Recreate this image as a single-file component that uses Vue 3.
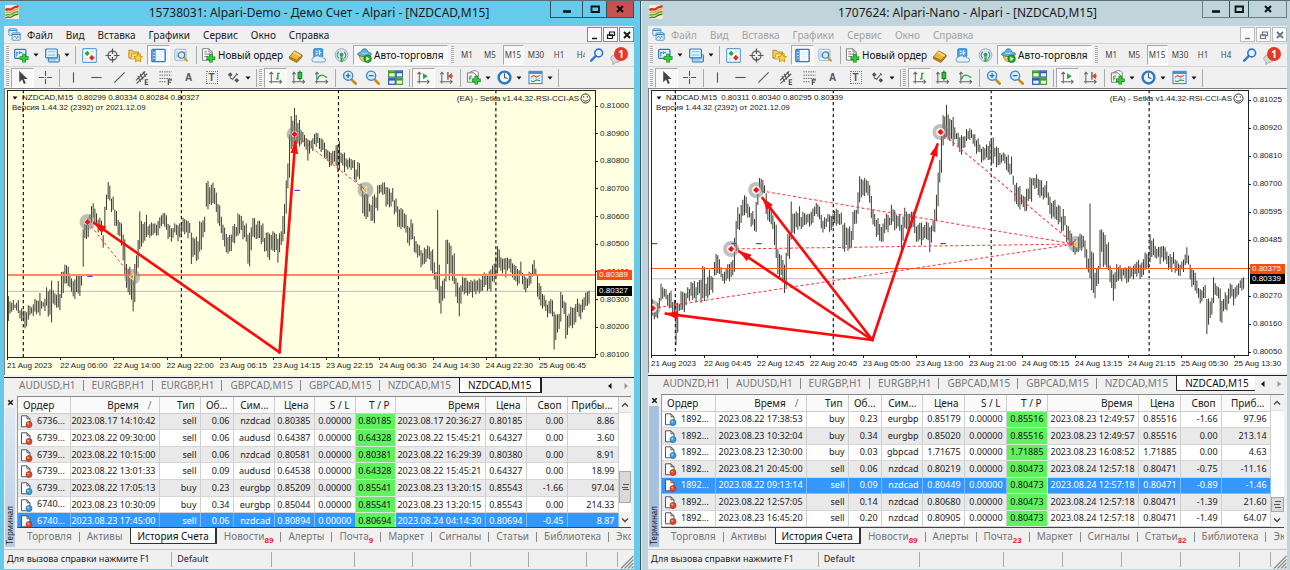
<script setup>
// Bar ranges as x, high, low triplets in plot units (three units per pixel).
const demoBars = [
  25,620,698, 32,632,668, 40,630,655, 48,640,655, 55,628,668, 62,655,690, 70,658,690, 80,665,710, 85,640,682, 92,648,675,
  100,645,675, 108,625,668, 115,632,668, 122,605,670, 128,635,655, 135,620,660, 140,592,650, 148,600,675, 155,570,690,
  160,595,640, 168,610,650, 175,575,655, 182,610,655, 186,540,625, 191,545,602, 197,520,580, 203,528,585, 210,545,595,
  215,565,600, 222,570,620, 230,555,605, 238,552,615, 244,550,590, 247,498,585, 250,420,525, 256,400,445, 263,385,440,
  268,370,410, 275,350,395, 281,338,385, 286,350,395, 292,370,410, 298,385,420, 303,390,440, 308,430,470, 313,400,460,
  316,350,420, 320,310,355, 325,278,328, 332,285,325, 338,320,365, 344,355,405, 350,365,410, 356,388,430, 362,390,440,
  368,400,460, 372,430,510, 376,450,560, 381,520,590, 388,530,610, 395,550,630, 401,560,657, 405,520,635, 409,490,560,
  413,450,530
]
const sharedBars = [
  418,360,480, 424,395,465, 430,400,460, 436,390,445, 442,375,440, 448,405,440, 455,395,440, 462,395,430, 468,400,430,
  475,395,435, 482,380,420, 488,370,405, 495,365,405, 502,378,420, 508,400,440, 515,415,460, 520,410,440, 527,402,430,
  535,400,455, 542,400,435, 550,385,430, 557,385,430, 564,393,440, 570,395,430, 575,430,515, 582,440,500, 590,440,510,
  597,450,512, 603,395,480, 608,385,435, 614,380,425, 618,330,400, 622,275,355, 630,290,345, 638,278,340, 645,290,335,
  652,310,365, 658,340,405, 664,380,432, 670,400,445, 676,415,470, 682,430,480, 688,435,490, 694,430,480, 700,410,460,
  706,400,455, 712,405,440, 718,370,430, 724,380,425, 730,390,445, 736,400,445, 742,400,450, 748,430,522, 753,410,480,
  758,378,445, 764,385,440, 770,400,450, 776,395,440, 782,390,445, 788,400,455, 794,440,490, 800,430,480, 808,425,505,
  815,435,480, 822,420,475, 828,430,485, 835,440,515, 840,430,490, 845,420,460, 850,380,455, 855,340,425, 860,265,370,
  865,220,300, 870,130,260, 874,80,180, 878,90,165, 883,48,150, 890,75,165, 896,95,160, 902,92,175, 908,120,160,
  914,135,165, 920,140,180, 926,150,205, 932,150,190, 938,145,180, 944,128,165, 950,130,165, 956,128,160, 962,138,170,
  968,145,185, 975,160,200, 982,175,208, 990,185,232, 998,185,220, 1005,180,220, 1012,160,225, 1016,165,250, 1021,150,235,
  1028,190,220, 1035,182,245, 1042,205,235, 1050,205,235, 1058,205,235, 1065,210,262, 1072,235,275, 1078,218,265,
  1084,275,305, 1090,300,365, 1097,310,380, 1103,312,380, 1110,335,370, 1117,345,390, 1123,315,395, 1130,320,355,
  1136,280,355, 1142,285,310, 1148,280,312, 1154,275,315, 1162,285,345, 1168,292,345, 1175,310,348, 1182,292,340,
  1188,325,370, 1194,345,405, 1200,360,412, 1207,352,410, 1214,370,420, 1222,370,425, 1228,410,462, 1235,382,450,
  1240,400,440, 1246,435,485, 1252,455,495, 1258,460,500, 1265,480,527, 1272,485,525, 1278,475,515, 1285,460,510,
  1292,470,505, 1298,480,545, 1304,515,570, 1310,540,590, 1315,360,600, 1321,520,645, 1326,590,668, 1332,570,635,
  1337,560,620, 1341,450,575, 1346,445,515, 1351,460,570, 1356,465,555, 1362,490,570, 1366,490,585, 1371,560,615,
  1376,580,640, 1381,590,672, 1387,580,640, 1393,560,610, 1400,565,612, 1408,570,612, 1415,570,600, 1422,570,622,
  1428,570,610, 1435,565,605, 1442,565,605, 1450,555,595, 1458,545,590, 1465,555,600, 1472,540,600, 1480,525,575,
  1487,515,570, 1491,500,560, 1495,465,555, 1501,480,530, 1508,500,545, 1515,505,540, 1522,500,555, 1528,505,540,
  1535,500,545, 1542,520,565, 1550,530,575, 1558,535,580, 1564,515,560, 1570,545,580, 1577,560,602, 1584,560,595,
  1592,545,580, 1599,525,565, 1605,508,550, 1610,530,560, 1615,555,615, 1621,575,630, 1627,590,640, 1633,610,655,
  1639,630,660, 1645,640,685, 1652,635,665, 1658,625,672, 1664,665,778, 1669,670,755, 1674,675,725, 1679,670,720,
  1684,600,690, 1690,615,655, 1696,630,665, 1701,640,745, 1706,675,740, 1712,665,710, 1718,650,710, 1724,655,705,
  1730,640,690, 1735,620,665, 1742,640,685, 1750,630,670, 1757,620,655, 1760,602,650, 1766,605,640, 1774,598,640
]
const nanoBars = [
  38,630,680, 45,650,685, 53,640,680, 58,620,655, 63,583,625, 70,590,625, 78,598,625, 85,610,650, 92,600,655, 98,630,665,
  104,630,680, 107,635,770, 111,640,725, 116,640,665, 122,598,655, 130,605,660, 138,612,645, 145,590,630, 152,575,620,
  160,575,625, 168,590,630, 175,570,615, 182,565,635, 190,530,628, 197,575,620, 204,560,618, 210,535,615, 216,560,605,
  222,510,560, 230,492,550, 237,510,545, 244,530,560, 250,545,578, 258,530,575, 264,525,560, 270,520,575, 276,510,555,
  281,440,550, 286,395,480, 292,350,420, 298,365,415, 304,345,400, 310,325,370, 316,318,375, 322,335,380, 328,350,385,
  335,365,405, 342,385,415, 346,400,440, 349,330,425, 354,290,350, 360,260,300, 366,268,305, 371,280,310, 377,310,365,
  384,340,390, 391,350,400, 398,370,420, 405,395,460, 410,400,505, 415,480,545, 421,490,560, 427,510,575, 434,520,612,
  440,490,585, 446,430,500
]

function triplets(flat) {
  const out = []
  for (let i = 0; i < flat.length; i += 3) out.push([flat[i], flat[i + 1], flat[i + 2]])
  return out
}

function barPath(points) {
  let d = ''
  let k = 0
  let n = 0
  const last = points[points.length - 1][0]
  for (let x = points[0][0]; x <= last; x += 5) {
    while (k < points.length - 2 && points[k + 1][0] < x) k++
    const a = points[k]
    const b = points[k + 1]
    const near = Math.abs(a[0] - x) < Math.abs(b[0] - x) ? a : b
    const up = (n * 7) % 5 * 2 - 2
    const down = (n * 11) % 7 * 2 - 5
    d += `M${x} ${near[1] + up}V${near[2] + down}`
    n++
  }
  return d
}

const demoPath = barPath([...triplets(demoBars), ...triplets(sharedBars)])
const nanoPath = barPath([
  ...triplets(nanoBars),
  ...triplets(sharedBars).map(([x, h, l]) => [x + 35, h * 0.938 - 3, l * 0.938 - 3])
])

const menus = ['Файл', 'Вид', 'Вставка', 'Графики', 'Сервис', 'Окно', 'Справка']
const heads = ['Ордер', 'Время', 'Тип', 'Об...', 'Сим...', 'Цена', 'S / L', 'T / P', 'Время', 'Цена', 'Своп']
const frames = ['M1', 'M5', 'M15', 'M30', 'H1', 'H4']
const drawTools = ['vline', 'hline', 'tline', 'channel', 'fibo', 'letter', 'label']

const windows = [
  {
    id: 'demo',
    title: '15738031: Alpari-Demo - Демо Счет - Alpari - [NZDCAD,M15]',
    quote: '0.80299 0.80334 0.80284 0.80327',
    view: '24 3 1764 798',
    right: 1788,
    core: 9,
    askWidth: 6,
    bars: demoPath,
    days: [70, 545, 1017, 1490],
    ask: 554,
    bid: 604,
    deals: [[263, 396, 397, 561], [885, 133, 1098, 300]],
    opens: [[263, 396], [885, 133]],
    closes: [[397, 561], [1098, 300]],
    stops: [[262, 559], [885, 301]],
    arrows: [[840, 787, 283, 399], [840, 787, 887, 155]],
    prices: ['0.81000', '0.80900', '0.80800', '0.80700', '0.80600', '0.80500', '0.80400', '0.80300', '0.80200', '0.80100'],
    askPrice: '0.80389',
    bidPrice: '0.80327',
    dates: ['21 Aug 2023', '22 Aug 06:00', '22 Aug 14:00', '22 Aug 22:00', '23 Aug 06:15', '23 Aug 14:15', '23 Aug 22:15', '24 Aug 06:30', '24 Aug 14:30', '24 Aug 22:30', '25 Aug 06:45'],
    tabs: ['AUDUSD,H1', 'EURGBP,H1', 'EURGBP,H1', 'GBPCAD,M15', 'GBPCAD,M15', 'NZDCAD,M15', 'NZDCAD,M15'],
    profit: 'Прибы...',
    cols: [52, 89, 41, 33, 41, 40, 41, 40, 90, 41, 41, 51],
    selected: 6,
    striped: 0,
    rows: [
      ['6736...', '2023.08.17 14:10:42', 'sell', '0.06', 'nzdcad', '0.80385', '0.00000', '0.80185', '2023.08.17 20:36:27', '0.80185', '0.00', '8.86'],
      ['6739...', '2023.08.22 09:30:00', 'sell', '0.06', 'audusd', '0.64387', '0.00000', '0.64328', '2023.08.22 15:45:21', '0.64327', '0.00', '3.60'],
      ['6739...', '2023.08.22 10:15:00', 'sell', '0.06', 'nzdcad', '0.80581', '0.00000', '0.80381', '2023.08.22 16:29:39', '0.80380', '0.00', '8.91'],
      ['6739...', '2023.08.22 13:01:33', 'sell', '0.09', 'audusd', '0.64538', '0.00000', '0.64328', '2023.08.22 15:45:21', '0.64327', '0.00', '18.99'],
      ['6739...', '2023.08.22 17:05:13', 'buy', '0.23', 'eurgbp', '0.85209', '0.00000', '0.85541', '2023.08.23 13:20:15', '0.85543', '-1.66', '97.04'],
      ['6740...', '2023.08.23 10:30:09', 'buy', '0.34', 'eurgbp', '0.85044', '0.00000', '0.85541', '2023.08.23 13:20:15', '0.85543', '0.00', '214.33'],
      ['6740...', '2023.08.23 17:45:00', 'sell', '0.06', 'nzdcad', '0.80894', '0.00000', '0.80694', '2023.08.24 04:14:30', '0.80694', '-0.45', '8.87']
    ],
    sections: [['Торговля'], ['Активы'], ['История Счета'], ['Новости', 89], ['Алерты'], ['Почта', 9], ['Маркет'], ['Сигналы'], ['Статьи'], ['Библиотека'], ['Эксперты']]
  },
  {
    id: 'nano',
    title: '1707624: Alpari-Nano - Alpari - [NZDCAD,M15]',
    quote: '0.80311 0.80340 0.80295 0.80339',
    view: '36 3 1785 792',
    right: 1821,
    core: 13,
    askWidth: 4,
    bars: nanoPath,
    days: [106, 579, 1052, 1525],
    ask: 536,
    bid: 566,
    deals: [[38, 655, 1300, 462], [273, 477, 1300, 462], [348, 300, 1300, 462], [900, 126, 1300, 462]],
    opens: [[38, 655], [273, 477], [348, 300], [900, 126]],
    closes: [[1305, 462]],
    stops: [[36, 461], [273, 461], [348, 461], [900, 461]],
    arrows: [[696, 750, 77, 671], [696, 750, 297, 484], [696, 750, 367, 324], [696, 750, 891, 163]],
    prices: ['0.81025', '0.80920', '0.80810', '0.80700', '0.80595', '0.80485', '0.80380', '0.80270', '0.80160', '0.80050'],
    askPrice: '0.80375',
    bidPrice: '0.80339',
    dates: ['21 Aug 2023', '22 Aug 04:45', '22 Aug 12:45', '22 Aug 20:45', '23 Aug 05:00', '23 Aug 13:00', '23 Aug 21:00', '24 Aug 05:15', '24 Aug 13:15', '24 Aug 21:15', '25 Aug 05:30', '25 Aug 13:30'],
    tabs: ['AUDNZD,H1', 'AUDUSD,H1', 'EURGBP,H1', 'EURGBP,H1', 'GBPCAD,M15', 'GBPCAD,M15', 'NZDCAD,M15', 'NZDCAD,M15'],
    profit: 'Приб...',
    cols: [53, 91, 42, 33, 41, 42, 42, 41, 91, 42, 41, 49],
    selected: 4,
    striped: 1,
    rows: [
      ['1892...', '2023.08.22 17:38:53', 'buy', '0.23', 'eurgbp', '0.85179', '0.00000', '0.85516', '2023.08.23 12:49:57', '0.85516', '-1.66', '97.96'],
      ['1892...', '2023.08.23 10:32:04', 'buy', '0.34', 'eurgbp', '0.85020', '0.00000', '0.85516', '2023.08.23 12:49:57', '0.85516', '0.00', '213.14'],
      ['1892...', '2023.08.23 12:30:00', 'buy', '0.03', 'gbpcad', '1.71675', '0.00000', '1.71885', '2023.08.23 16:08:52', '1.71885', '0.00', '4.63'],
      ['1892...', '2023.08.21 20:45:00', 'sell', '0.06', 'nzdcad', '0.80219', '0.00000', '0.80473', '2023.08.24 12:57:18', '0.80471', '-0.75', '-11.16'],
      ['1892...', '2023.08.22 09:13:14', 'sell', '0.09', 'nzdcad', '0.80449', '0.00000', '0.80473', '2023.08.24 12:57:18', '0.80471', '-0.89', '-1.46'],
      ['1892...', '2023.08.22 12:57:05', 'sell', '0.14', 'nzdcad', '0.80680', '0.00000', '0.80473', '2023.08.24 12:57:18', '0.80471', '-1.39', '21.60'],
      ['1892...', '2023.08.23 16:45:20', 'sell', '0.20', 'nzdcad', '0.80905', '0.00000', '0.80473', '2023.08.24 12:57:18', '0.80471', '-1.49', '64.07']
    ],
    sections: [['Торговля'], ['Активы'], ['История Счета'], ['Новости', 89], ['Алерты'], ['Почта', 23], ['Маркет'], ['Сигналы'], ['Статьи', 32], ['Библиотека'], ['Эксперты']]
  }
]

// Vertical place of a level line inside the plot, as a share of its height.
function level(w, y) {
  return `${((y - 3) / Number(w.view.split(' ')[3])) * 100}%`
}
</script>

<template>
  <svg class="sprite" aria-hidden="true">
    <symbol id="i-logo" viewBox="0 0 16 16">
      <rect width="16" height="16" fill="#f4ecd8" />
      <path d="M.5 6c3-3 5 1 8-2s4-1 7-3" fill="none" stroke="#d8302a" stroke-width="2.600" />
      <path d="M.5 9.200c3-3 5 1 8-2s4-1 7-3" fill="none" stroke="#e8a23a" stroke-width="1.600" />
      <path d="M.5 12c3-3 5 1 8-2s4-1 7-3" fill="none" stroke="#5fae34" stroke-width="2" />
      <path d="M.5 15c3-3 5 1 8-2s4-1 7-3" fill="none" stroke="#3f7a2e" stroke-width="1.600" />
    </symbol>
    <symbol id="i-charts" viewBox="0 0 16 16">
      <rect x="1" y="1" width="10" height="8" rx="1" fill="#dff0fb" stroke="#3f8fce" />
      <path d="M1 3h10" stroke="#3f8fce" stroke-width="1.500" />
      <rect x="5" y="6" width="10" height="9" rx="1" fill="#e9f5fd" stroke="#2f7fc4" />
      <path d="M5 8h10" stroke="#2f7fc4" stroke-width="1.500" />
      <path d="M6.500 12l2-2 2 3 1.500-3 1.500 2" fill="none" stroke="#2f7fc4" stroke-width=".9" />
    </symbol>
    <symbol id="i-newchart" viewBox="0 0 16 16">
      <rect x=".7" y="1.500" width="12" height="9.500" rx="1" fill="#e4f2fb" stroke="#2e79b5" stroke-width="1.300" />
      <path d="M3 4v5M3 5h2M6 3.500v3M6 5h3" stroke="#2e79b5" />
      <path d="M10.700 6v9.500M6 10.700h9.500" stroke="#0c8a16" stroke-width="3.800" />
      <path d="M10.700 6.700v8.100M6.700 10.700h8.100" stroke="#35d035" stroke-width="2.200" />
    </symbol>
    <symbol id="i-profiles" viewBox="0 0 16 16">
      <rect x="3.500" y="7" width="12" height="8" rx="1" fill="#a9cdea" stroke="#2e79b5" />
      <rect x=".7" y="1" width="12.500" height="9.500" rx="1" fill="#e4f2fb" stroke="#2e79b5" stroke-width="1.200" />
      <path d="M3 4h8M3 7.500h8" stroke="#7fb2da" />
      <path d="M12 13h2" stroke="#fff" />
    </symbol>
    <symbol id="i-market" viewBox="0 0 16 16">
      <rect x=".7" y=".7" width="14.600" height="14.600" rx="1" fill="#f8fcff" stroke="#5ba0d6" stroke-width="1.200" />
      <path d="M5.500 3l2.800 2.800-2.800 2.800-2.800-2.800z" fill="#24a836" />
      <path d="M10.500 7.300l3 3.200-3 3.200-3-3.200z" fill="#dd3322" />
      <path d="M9 4h4M3 11h3M3 13h2" stroke="#b9cfe0" />
    </symbol>
    <symbol id="i-target" viewBox="0 0 16 16">
      <circle cx="8" cy="8" r="4.800" fill="none" stroke="#666" stroke-width="1.400" />
      <path d="M8 .5v6M8 9.500v6M.5 8h6M9.500 8h6" stroke="#555" stroke-width="1.300" />
    </symbol>
    <symbol id="i-folder" viewBox="0 0 17 16">
      <path d="M1 2h4l1.500 2H12v7H1z" fill="#f0cf61" stroke="#ae8320" />
      <path d="M4.500 6H14v2L12 12H3z" fill="#f9e28a" stroke="#b98d28" stroke-width=".8" />
      <path d="M11.500 5.500l1.600 3.300 3.400.5-2.500 2.400.6 3.500-3.100-1.700-3.100 1.700.6-3.500-2.500-2.400 3.400-.5z" fill="#ffd23b" stroke="#c28a0e" stroke-width=".9" />
    </symbol>
    <symbol id="i-navigator" viewBox="0 0 16 16">
      <rect x=".9" y="1.500" width="14.200" height="13" rx="1" fill="#fdfeff" stroke="#2e79c0" stroke-width="1.500" />
      <path d="M1.500 2h3.500v12H1.500z" fill="#4b92d2" />
      <path d="M2.500 5h1.500M2.500 8h1.500M2.500 11h1.500" stroke="#fff" />
      <path d="M6.500 4.500h7M6.500 7h5M6.500 9.500h6M6.500 12h4" stroke="#d5e6f5" />
    </symbol>
    <symbol id="i-tester" viewBox="0 0 17 16">
      <rect x="1" y="1" width="12.500" height="12.500" rx="1" fill="#f2f7fb" stroke="#86abc9" />
      <path d="M3.500 3v8M6 4v5M11.500 3v8" stroke="#86abc9" />
      <circle cx="8.500" cy="7.500" r="3.600" fill="#cfe7fa" fill-opacity=".85" stroke="#4a7da8" stroke-width="1.300" />
      <path d="M11.400 10.500l4 4" stroke="#d79b28" stroke-width="2.400" />
    </symbol>
    <symbol id="i-order" viewBox="0 0 15 16">
      <path d="M1 .8h7l3.500 3.500V13H1z" fill="#fff" stroke="#777" />
      <path d="M8 .8v3.500h3.500M3 4h3M3 6.500h6M3 9h4" fill="none" stroke="#777" />
      <path d="M10 6.200v9.300M5.300 11h9.400" stroke="#0c8a16" stroke-width="3.800" />
      <path d="M10 6.900v7.900M6 11h8" stroke="#35d035" stroke-width="2.200" />
    </symbol>
    <symbol id="i-book" viewBox="0 0 16 16">
      <path d="M1.500 9.500L7 3l8 4.500-5.500 6z" fill="#e9b93c" stroke="#a87414" />
      <path d="M1.500 9.500v2L9.500 15.500l5.500-6v-2l-5.500 6z" fill="#c98d1d" stroke="#94600c" stroke-width=".8" />
      <path d="M6 4.500l7.500 4.200" stroke="#f9e08f" stroke-width="1.500" />
    </symbol>
    <symbol id="i-cloud" viewBox="0 0 16 16">
      <rect x="3" y=".8" width="9.500" height="9" rx="1" fill="#46a7ea" stroke="#2577ba" />
      <path d="M5 3.500h2M5 6h2M9 2.500v5M8 5h3" stroke="#fff" stroke-width="1.200" />
      <path d="M3.500 15a2.500 2.500 0 0 1 0-5 3.500 3 0 0 1 6-.5 3 3 0 0 1 4 1.500 2 2 0 0 1 0 4z" fill="#e6eff8" stroke="#6f9cc7" />
    </symbol>
    <symbol id="i-signal" viewBox="0 0 16 16">
      <circle cx="8" cy="7.500" r="6.800" fill="#dbe4ea" stroke="#94a9b5" />
      <path d="M5 4a5 5 0 0 0 0 7M11 4a5 5 0 0 1 0 7" fill="none" stroke="#4c86b5" stroke-width="1.300" />
      <circle cx="8" cy="7" r="2" fill="#35a14b" />
      <path d="M8 8v7" stroke="#35a14b" stroke-width="2.200" />
      <path d="M8 9l3 5" stroke="#7abf7a" stroke-width="1.500" />
    </symbol>
    <symbol id="i-auto" viewBox="0 0 16 16">
      <path d="M2.500 8h11c0 3.500-2.500 6.500-5.500 6.500S2.500 11.500 2.500 8z" fill="#f3cc55" stroke="#b88a1d" />
      <path d="M.5 7c0-2 2.500-2 3.800-2.600C5 1.500 6.500.8 8 .8s3 .7 3.700 3.600C13 5 15.500 5 15.500 7c-2.500 2.800-12.500 2.800-15 0z" fill="#5fb1dc" stroke="#28759f" stroke-width=".9" />
      <path d="M4.500 5c2 1 5 1 7 0" fill="none" stroke="#bfe2f3" />
      <circle cx="11.300" cy="11.500" r="4" fill="#29a82c" stroke="#11741a" stroke-width=".8" />
      <path d="M10 9.200l3.600 2.300-3.600 2.300z" fill="#fff" />
    </symbol>
    <symbol id="i-search" viewBox="0 0 14 14">
      <circle cx="8.700" cy="5" r="3.900" fill="#e9f3fd" stroke="#3573c8" stroke-width="1.600" />
      <path d="M5.700 8L1.200 12.700" stroke="#3573c8" stroke-width="2.400" stroke-linecap="round" />
    </symbol>
    <symbol id="i-bubble" viewBox="0 0 12 11">
      <path d="M6 .8c3 0 5.200 1.600 5.200 3.800S9 8.400 6 8.400L2.500 10.500l.7-2.700C1.700 7 .8 6 .8 4.600.8 2.400 3 .8 6 .8z" fill="#d9dadd" stroke="#a9abb0" />
    </symbol>
    <symbol id="i-cursor" viewBox="0 0 16 16">
      <path d="M4.500 1v12l3-2.800 2 4.600 2-1-2-4.300h4z" fill="#444" />
    </symbol>
    <symbol id="i-cross" viewBox="0 0 16 16">
      <path d="M8 1v5.500M8 9.500V15M1 8h5.500M9.500 8H15" stroke="#555" stroke-width="1.200" />
      <path d="M7.500 8h1" stroke="#555" />
    </symbol>
    <symbol id="i-vline" viewBox="0 0 16 16"><path d="M8 2.500v11" stroke="#555" stroke-width="1.200" /></symbol>
    <symbol id="i-hline" viewBox="0 0 16 16"><path d="M2.500 8h11" stroke="#555" stroke-width="1.200" /></symbol>
    <symbol id="i-tline" viewBox="0 0 16 16"><path d="M2.500 13.500l11-11" stroke="#555" stroke-width="1.200" /></symbol>
    <symbol id="i-channel" viewBox="0 0 16 16">
      <path d="M1 11L11 1.500M1.500 14.500L13 4M3 6.500l3 6M5.500 4l3 6M8.500 2l3 5" fill="none" stroke="#555" stroke-width="1.200" />
      <path d="M10.500 10.500H14M10.500 13H13.500M10.500 15.500H14M11 10v6" stroke="#444" stroke-width="1.100" />
    </symbol>
    <symbol id="i-fibo" viewBox="0 0 16 16">
      <path d="M1.500 2h13M1.500 5.500h13M1.500 9h13M1.500 12.500h7" stroke="#555" stroke-dasharray="1.500 1" />
      <path d="M10.500 10.500H15M10.500 13H14M11 10v6" stroke="#444" stroke-width="1.200" />
    </symbol>
    <symbol id="i-arrows" viewBox="0 0 16 16">
      <path d="M2 5l2.500-2.500L7 5 4.500 7.500zM9 11l2.500-2.500L14 11l-2.500 2.500z" fill="#555" />
      <path d="M4 8l3 2 5-6M11 3.500l1.500 2" fill="none" stroke="#555" stroke-width="1.200" />
    </symbol>
    <symbol id="i-bars" viewBox="0 0 16 16">
      <path d="M3.500 2.500v12M1 12.500h13.500M1.500 4.500l2-2 2 2M12.500 10.500l2 2-2 2" fill="none" stroke="#666" stroke-width="1.100" />
      <path d="M10.500 3v7M10.500 3.500h2M8.500 9.500h2" stroke="#189a2d" stroke-width="1.400" />
    </symbol>
    <symbol id="i-candles" viewBox="0 0 16 16">
      <path d="M3 2.500v12M1 12.500h13.500M1.500 4.500l1.500-2 2 2M12.500 10.500l2 2-2 2" fill="none" stroke="#666" stroke-width="1.100" />
      <path d="M9.500 .5v11" stroke="#117a20" stroke-width="1.200" />
      <rect x="7.500" y="2.500" width="4" height="6.500" fill="#2fc242" stroke="#117a20" />
    </symbol>
    <symbol id="i-curve" viewBox="0 0 16 16">
      <path d="M3 2.500v12M1 12.500h13.500M1.500 4.500l1.500-2 2 2M12.500 10.500l2 2-2 2" fill="none" stroke="#666" stroke-width="1.100" />
      <path d="M3.500 10C6 4 9 4.500 14 8" fill="none" stroke="#22a037" stroke-width="1.400" />
    </symbol>
    <symbol id="i-zoomin" viewBox="0 0 16 16">
      <path d="M10 10l4.500 4.500" stroke="#c78f1d" stroke-width="3" stroke-linecap="round" />
      <circle cx="6.500" cy="6" r="4.900" fill="#d6ebfb" stroke="#3e86c4" stroke-width="1.400" />
      <path d="M4 6h5M6.500 3.500v5" stroke="#2a6fb0" stroke-width="1.400" />
    </symbol>
    <symbol id="i-zoomout" viewBox="0 0 16 16">
      <path d="M10 10l4.500 4.500" stroke="#c78f1d" stroke-width="3" stroke-linecap="round" />
      <circle cx="6.500" cy="6" r="4.900" fill="#d6ebfb" stroke="#3e86c4" stroke-width="1.400" />
      <path d="M4 6h5" stroke="#2a6fb0" stroke-width="1.400" />
    </symbol>
    <symbol id="i-tile" viewBox="0 0 16 16">
      <rect x=".7" y="1" width="7" height="6.500" fill="#eef7e8" stroke="#3c9c28" stroke-width="1.300" />
      <path d="M.7 2.500h7" stroke="#3c9c28" stroke-width="2" />
      <rect x="8.700" y="1" width="7" height="6.500" fill="#e8f0fa" stroke="#2c5fb0" stroke-width="1.300" />
      <path d="M8.700 2.500h7" stroke="#2c5fb0" stroke-width="2" />
      <rect x=".7" y="8.800" width="7" height="6.500" fill="#e8f0fa" stroke="#2c5fb0" stroke-width="1.300" />
      <path d="M.7 10.300h7" stroke="#2c5fb0" stroke-width="2" />
      <rect x="8.700" y="8.800" width="7" height="6.500" fill="#eef7e8" stroke="#3c9c28" stroke-width="1.300" />
      <path d="M8.700 10.300h7" stroke="#3c9c28" stroke-width="2" />
    </symbol>
    <symbol id="i-scroll" viewBox="0 0 16 16">
      <path d="M3.500 2v12.500M1 12.500h13M1.500 4.500l2-2 2 2M12 10.500l2 2-2 2" fill="none" stroke="#666" stroke-width="1.100" />
      <path d="M7.500 3.500l5 3.200-5 3.200z" fill="#22a837" />
    </symbol>
    <symbol id="i-shift" viewBox="0 0 16 16">
      <path d="M3 2v12.500M1 12.500h13M1.500 4.500l1.500-2 2 2M12 10.500l2 2-2 2" fill="none" stroke="#666" stroke-width="1.100" />
      <path d="M9.500 2v8.500" stroke="#555" stroke-width="1.300" />
      <path d="M10 6.500l3.500-2.500v5zM12 6.500h3" fill="#d6452c" stroke="#d6452c" />
    </symbol>
    <symbol id="i-indicator" viewBox="0 0 16 16">
      <path d="M4 2.500L7.500.8H11l2 2V11H4z" fill="#fff" stroke="#777" />
      <path d="M1.500 3h7l2.500 2.500V13H1.500z" fill="#f4f4f4" stroke="#777" />
      <path d="M4 11V6.500h2.500M3 8.500h3" fill="none" stroke="#777" />
      <path d="M11 6.200v9.300M6.300 11h9.400" stroke="#0c8a16" stroke-width="3.800" />
      <path d="M11 6.900v7.900M7 11h8" stroke="#35d035" stroke-width="2.200" />
    </symbol>
    <symbol id="i-clock" viewBox="0 0 16 16">
      <circle cx="8" cy="8" r="6.300" fill="#eef6fd" stroke="#2c79c6" stroke-width="2.600" />
      <path d="M8 3.500V8l3.200 1" fill="none" stroke="#555" stroke-width="1.200" />
    </symbol>
    <symbol id="i-template" viewBox="0 0 16 16">
      <rect x="1" y="1.500" width="14" height="13" fill="#f5fafd" stroke="#4c8fc7" stroke-width="1.200" />
      <path d="M1 3h14" stroke="#4c8fc7" stroke-width="2.500" />
      <path d="M3 7.500l3-1.500 3 1.500 4-1.800" fill="none" stroke="#d0523c" stroke-width="1.200" />
      <path d="M3 11.500l3 1 3-2 4 1" fill="none" stroke="#379344" stroke-width="1.200" />
      <path d="M2 9h12" stroke="#a5c4de" stroke-dasharray="2 1" />
    </symbol>
    <symbol id="i-sell" viewBox="0 0 13 13">
      <path d="M1.500.8h5.500l3 3v8h-8.500z" fill="#fff" stroke="#555" />
      <path d="M7 .8v3h3" fill="none" stroke="#555" />
      <circle cx="9" cy="9.500" r="3" fill="#e4492a" stroke="#a62a10" stroke-width=".7" />
      <circle cx="8.200" cy="8.600" r=".9" fill="#ffb9a6" />
    </symbol>
    <symbol id="i-buy" viewBox="0 0 13 13">
      <path d="M1.500.8h5.500l3 3v8h-8.500z" fill="#fff" stroke="#555" />
      <path d="M7 .8v3h3" fill="none" stroke="#555" />
      <circle cx="9" cy="9.500" r="3" fill="#3a9fe0" stroke="#1566a4" stroke-width=".7" />
      <circle cx="8.200" cy="8.600" r=".9" fill="#c5e8ff" />
    </symbol>
    <symbol id="i-smile" viewBox="0 0 12 12">
      <circle cx="6" cy="6" r="5" fill="none" stroke="#222" />
      <path d="M4 3.500v1.500M8 3.500v1.500" stroke="#222" stroke-width="1.200" />
      <path d="M3 7.200c1.500 2.200 4.500 2.200 6 0" fill="none" stroke="#222" />
    </symbol>
    <symbol id="i-min" viewBox="0 0 12 12"><path d="M2 8.500h8" stroke="currentColor" stroke-width="2.600" /></symbol>
    <symbol id="i-max" viewBox="0 0 12 12"><path d="M2.500 3.500h7.500v5.500H2.500z" fill="none" stroke="currentColor" stroke-width="1.800" /></symbol>
    <symbol id="i-close" viewBox="0 0 12 12"><path d="M3 3l6 6M9 3l-6 6" stroke="currentColor" stroke-width="2" /></symbol>
    <symbol id="i-mdimin" viewBox="0 0 12 12"><path d="M3 9.500h5" stroke="currentColor" stroke-width="1.500" /></symbol>
    <symbol id="i-restore" viewBox="0 0 12 12">
      <path d="M4.500 3h5v3.500h-5zM2.500 5.800h5v3.700h-5z" fill="#f0f0f0" stroke="currentColor" stroke-width="1.200" />
    </symbol>
    <symbol id="i-up" viewBox="0 0 12 12"><path d="M3 7.500l3-3 3 3" fill="none" stroke="#444" stroke-width="1.300" /></symbol>
    <symbol id="i-down" viewBox="0 0 12 12"><path d="M3 4.500l3 3 3-3" fill="none" stroke="#444" stroke-width="1.300" /></symbol>
    <symbol id="i-prev" viewBox="0 0 12 12"><path d="M7.500 3v6L4 6z" fill="#111" /></symbol>
    <symbol id="i-next" viewBox="0 0 12 12"><path d="M4.500 3v6L8 6z" fill="#999" /></symbol>
    <symbol id="i-caret" viewBox="0 0 6 4"><path d="M.5.500h5L3 3.500z" fill="#111" /></symbol>
    <symbol id="i-size" viewBox="0 0 14 14">
      <path d="M1 13.500L13.500 1M4.500 13.500L13.500 4.500M8 13.500l5.500-5.500M11.500 13.500l2-2" stroke="#888" stroke-width="1.200" />
    </symbol>
  </svg>

  <main class="desktop">
    <section v-for="w in windows" :key="w.id" class="win" :class="w.id">
      <header class="title">
        <svg class="logo"><use href="#i-logo" /></svg>
        <h1>{{ w.title }}</h1>
        <div class="caption">
          <button type="button" class="cap-min" aria-label="Свернуть"><svg><use href="#i-min" /></svg></button>
          <button type="button" class="cap-max" aria-label="Развернуть"><svg><use href="#i-max" /></svg></button>
          <button type="button" class="cap-close" aria-label="Закрыть"><svg><use href="#i-close" /></svg></button>
        </div>
      </header>

      <div class="client">
        <nav class="menu">
          <svg class="menu-icon"><use href="#i-charts" /></svg>
          <button v-for="m in menus" :key="m" type="button">{{ m }}</button>
          <div class="mdi">
            <button type="button" aria-label="Свернуть график"><svg><use href="#i-mdimin" /></svg></button>
            <button type="button" aria-label="Восстановить график"><svg><use href="#i-restore" /></svg></button>
            <button type="button" aria-label="Закрыть график"><svg><use href="#i-close" /></svg></button>
          </div>
        </nav>

        <div class="bar main-bar">
          <i class="grip"></i>
          <button type="button" class="tool drop" aria-label="Новый график"><svg class="ic"><use href="#i-newchart" /></svg><svg class="caret"><use href="#i-caret" /></svg></button>
          <button type="button" class="tool drop" aria-label="Профили"><svg class="ic"><use href="#i-profiles" /></svg><svg class="caret"><use href="#i-caret" /></svg></button>
          <i class="sep"></i>
          <button type="button" class="tool" aria-label="Обзор рынка"><svg class="ic"><use href="#i-market" /></svg></button>
          <button type="button" class="tool" aria-label="Окно данных"><svg class="ic"><use href="#i-target" /></svg></button>
          <button type="button" class="tool" aria-label="Навигатор"><svg class="ic"><use href="#i-folder" /></svg></button>
          <button type="button" class="tool on" aria-label="Терминал"><svg class="ic"><use href="#i-navigator" /></svg></button>
          <button type="button" class="tool" aria-label="Тестер"><svg class="ic"><use href="#i-tester" /></svg></button>
          <i class="sep wide"></i>
          <button type="button" class="tool text"><svg class="ic"><use href="#i-order" /></svg>Новый ордер</button>
          <button type="button" class="tool" aria-label="Редактор"><svg class="ic"><use href="#i-book" /></svg></button>
          <button type="button" class="tool" aria-label="Хостинг"><svg class="ic"><use href="#i-cloud" /></svg></button>
          <button type="button" class="tool" aria-label="Сигналы"><svg class="ic"><use href="#i-signal" /></svg></button>
          <button type="button" class="tool text auto on"><svg class="ic"><use href="#i-auto" /></svg>Авто-торговля</button>
          <i class="grip far"></i>
          <div class="frames">
            <button v-for="f in frames" :key="f" type="button" class="tool frame" :class="{ on: f === 'M15' }">{{ f }}</button>
          </div>
          <button type="button" class="tool find" aria-label="Поиск"><svg><use href="#i-search" /></svg></button>
          <button type="button" class="tool note"><svg><use href="#i-bubble" /></svg><b>1</b></button>
        </div>

        <div class="bar chart-bar">
          <i class="grip"></i>
          <button type="button" class="tool on" aria-label="Курсор"><svg class="ic"><use href="#i-cursor" /></svg></button>
          <button type="button" class="tool" aria-label="Перекрестие"><svg class="ic"><use href="#i-cross" /></svg></button>
          <i class="sep"></i>
          <button v-for="t in drawTools" :key="t" type="button" class="tool" :aria-label="t">
            <span v-if="t === 'letter'" class="glyph">A</span>
            <span v-else-if="t === 'label'" class="glyph boxed">T</span>
            <svg v-else class="ic"><use :href="'#i-' + t" /></svg>
          </button>
          <button type="button" class="tool drop" aria-label="Стрелки"><svg class="ic"><use href="#i-arrows" /></svg><svg class="caret"><use href="#i-caret" /></svg></button>
          <i class="sep"></i>
          <i class="grip"></i>
          <button type="button" class="tool on" aria-label="Бары"><svg class="ic"><use href="#i-bars" /></svg></button>
          <button type="button" class="tool" aria-label="Свечи"><svg class="ic"><use href="#i-candles" /></svg></button>
          <button type="button" class="tool" aria-label="Линия"><svg class="ic"><use href="#i-curve" /></svg></button>
          <i class="sep"></i>
          <button type="button" class="tool" aria-label="Увеличить"><svg class="ic"><use href="#i-zoomin" /></svg></button>
          <button type="button" class="tool" aria-label="Уменьшить"><svg class="ic"><use href="#i-zoomout" /></svg></button>
          <button type="button" class="tool" aria-label="Мозаика"><svg class="ic"><use href="#i-tile" /></svg></button>
          <i class="sep"></i>
          <button type="button" class="tool on" aria-label="Автопрокрутка"><svg class="ic"><use href="#i-scroll" /></svg></button>
          <button type="button" class="tool" aria-label="Сдвиг графика"><svg class="ic"><use href="#i-shift" /></svg></button>
          <i class="sep"></i>
          <button type="button" class="tool drop" aria-label="Индикаторы"><svg class="ic"><use href="#i-indicator" /></svg><svg class="caret"><use href="#i-caret" /></svg></button>
          <button type="button" class="tool drop" aria-label="Периоды"><svg class="ic"><use href="#i-clock" /></svg><svg class="caret"><use href="#i-caret" /></svg></button>
          <button type="button" class="tool drop" aria-label="Шаблоны"><svg class="ic"><use href="#i-template" /></svg><svg class="caret"><use href="#i-caret" /></svg></button>
          <i class="sep"></i>
        </div>

        <div class="chart">
          <div class="plot">
            <svg class="canvas" :viewBox="w.view" preserveAspectRatio="none">
              <defs>
                <marker :id="'tip-' + w.id" markerUnits="userSpaceOnUse" markerWidth="40" markerHeight="26" refX="36" refY="12" orient="auto">
                  <path d="M0 0L38 12L0 24z" fill="#ff0a0a" />
                </marker>
              </defs>
              <path v-for="d in w.days" :key="d" :d="`M${d} 0V801`" stroke="#111" stroke-width="3.500" stroke-dasharray="10 8" />
              <path :d="`M0 ${w.bid}H${w.right}`" stroke="#b9bdb6" stroke-width="3" />
              <path :d="w.bars" class="ink" />
              <path :d="`M0 ${w.ask}H${w.right}`" class="ask-line" :stroke-width="w.askWidth" />
              <path v-for="(s, i) in w.stops" :key="'s' + i" :d="`M${s[0]} ${s[1]}h16`" stroke="#1818ff" stroke-width="3" />
              <g v-for="(o, i) in w.opens" :key="'o' + i">
                <circle :cx="o[0]" :cy="o[1]" r="24" class="halo" />
                <circle :cx="o[0]" :cy="o[1]" :r="w.core" fill="#fff" fill-opacity=".8" />
                <path :d="`M${o[0]} ${o[1] - 9}l9 9l-9 9l-9 -9z`" fill="#f00" />
              </g>
              <g v-for="(c, i) in w.closes" :key="'c' + i">
                <circle :cx="c[0]" :cy="c[1]" r="24" class="halo" />
                <path :d="`M${c[0] + 4} ${c[1] - 10}v20l-13 -10z`" fill="#eab321" stroke="#fff" stroke-width="2" />
              </g>
              <path v-for="(l, i) in w.deals" :key="'l' + i" :d="`M${l[0]} ${l[1]}L${l[2]} ${l[3]}`" stroke="#ff3434" stroke-width="3" stroke-dasharray="9 7" />
              <path v-for="(a, i) in w.arrows" :key="'a' + i" :d="`M${a[0]} ${a[1]}L${a[2]} ${a[3]}`" stroke="#ff0a0a" stroke-width="8" stroke-linecap="round" :marker-end="`url(#tip-${w.id})`" />
            </svg>
            <div class="legend">
              <p><svg class="caret"><use href="#i-caret" /></svg><span>NZDCAD,M15</span><span>{{ w.quote }}</span></p>
              <p>Версия 1.44.32 (2392) от 2021.12.09</p>
            </div>
            <p class="expert">(EA) - Setka v1.44.32-RSI-CCI-AS<svg><use href="#i-smile" /></svg></p>
            <b class="tag ask" :style="{ top: level(w, w.ask) }">{{ w.askPrice }}</b>
            <b class="tag bid" :style="{ top: level(w, w.bid) }">{{ w.bidPrice }}</b>
          </div>
          <div class="prices"><span v-for="p in w.prices" :key="p">{{ p }}</span></div>
          <div class="dates"><span v-for="d in w.dates" :key="d">{{ d }}</span></div>
        </div>

        <div class="tabs">
          <div class="tab-list">
            <button v-for="(t, i) in w.tabs" :key="i" type="button" :class="{ active: i === w.tabs.length - 1 }">{{ t }}</button>
          </div>
          <button type="button" class="step" aria-label="Назад"><svg><use href="#i-prev" /></svg></button>
          <button type="button" class="step" aria-label="Вперёд"><svg><use href="#i-next" /></svg></button>
        </div>

        <div class="terminal">
          <aside>
            <button type="button" aria-label="Закрыть терминал"><svg><use href="#i-close" /></svg></button>
            <div class="side"><span>Терминал</span></div>
          </aside>
          <div class="body">
            <div class="grid">
              <table>
                <colgroup><col v-for="(c, i) in w.cols" :key="i" :style="{ width: c + 'px' }"></colgroup>
                <thead>
                  <tr>
                    <th v-for="(h, i) in heads" :key="i">{{ h }}<i v-if="i === 1">/</i></th>
                    <th>{{ w.profit }}</th>
                  </tr>
                </thead>
                <tbody>
                  <tr v-for="(r, ri) in w.rows" :key="ri" :class="{ alt: ri % 2 === w.striped, sel: ri === w.selected }">
                    <td v-for="(c, ci) in r" :key="ci" :class="{ goal: ci === 7 }"><svg v-if="ci === 0"><use :href="'#i-' + r[2]" /></svg>{{ c }}</td>
                  </tr>
                </tbody>
              </table>
              <div class="scroll">
                <button type="button" aria-label="Вверх"><svg><use href="#i-up" /></svg></button>
                <div class="track"><div class="thumb"></div></div>
                <button type="button" aria-label="Вниз"><svg><use href="#i-down" /></svg></button>
              </div>
            </div>
            <div class="sections">
              <button v-for="s in w.sections" :key="s[0]" type="button" :class="{ active: s[0] === 'История Счета' }">{{ s[0] }}<sub v-if="s[1]">{{ s[1] }}</sub></button>
            </div>
          </div>
        </div>

        <footer class="status">
          <span class="hint">Для вызова справки нажмите F1</span>
          <span class="profile">Default</span>
          <span class="wide"></span><span></span><span></span><span></span><span></span><span class="net"></span>
          <svg><use href="#i-size" /></svg>
        </footer>
      </div>
    </section>
  </main>
</template>

<style>
body { background: #5a6b73; }
</style>

<style scoped>
* { box-sizing: border-box; }
h1, p { margin: 0; font-weight: normal; }
button { margin: 0; padding: 0; border: 0; background: none; font: inherit; color: inherit; white-space: nowrap; }
svg { display: block; flex: none; }
.sprite { position: absolute; width: 0; height: 0; }

.desktop {
  display: flex;
  min-height: 100vh;
  padding-top: 1px;
  font: 10px/14px "Noto Sans", "Open Sans", sans-serif;
  color: #1a1a1a;
}
.win { display: flex; flex-direction: column; min-width: 0; }
.demo { flex: 640 1 0; padding: 0 6px 1px 4px; background: #66cbea; border-right: 1px solid #37535e; }
.nano { flex: 649 1 0; padding: 0 3px 1px 6px; background: #c0d4db; border-left: 1px solid #e4edf0; }

.title { display: grid; grid-template-columns: 84px 1fr 84px; height: 25px; flex: none; }
.logo { width: 14px; height: 14px; margin: 4px 0 0 1px; }
.title h1 { font-size: 12px; line-height: 24px; text-align: center; white-space: nowrap; }
.caption { display: flex; justify-self: end; height: 17px; border: 1px solid #35515b; border-top: 0; }
.caption button { display: grid; place-items: center; border-right: 1px solid #35515b; color: #111; }
.caption svg { width: 12px; height: 12px; }
.cap-min { width: 32px; }
.cap-max { width: 24px; }
.caption .cap-close { width: 26px; border-right: 0; }
.demo .cap-close { background: #c75050; }
.nano .cap-min { width: 27px; }
.nano .cap-max { width: 19px; }
.nano .caption .cap-close { width: 37px; }
.nano .caption { border-color: #6b7f86; }

.client { display: flex; flex-direction: column; flex: 1; background: #f0f0f0; min-width: 0; }
.menu { display: flex; align-items: center; height: 17px; gap: 13px; padding-left: 4px; }
.menu-icon { width: 13px; height: 13px; margin-right: -7px; }
.nano .menu > button { color: #a0a0a0; }
.mdi { display: flex; gap: 1px; margin-left: auto; }
.mdi button { display: grid; place-items: center; width: 15px; height: 15px; background: #fafafa; border: 1px solid #888; }
.mdi svg { width: 12px; height: 12px; }
.nano .mdi button { color: #6a7a88; border-color: #bbb; }

.bar { display: flex; align-items: center; height: 23px; border-top: 1px solid #d2d2d2; padding-left: 2px; overflow: hidden; }
.chart-bar { height: 22px; }
.bar .ic { width: 15px; height: 15px; }
.caret { width: 6px; height: 4px; }
.grip { flex: none; width: 3px; height: 18px; margin-right: 2px; background: repeating-linear-gradient(#aaa 0 1px, #f4f4f4 1px 2px); }
.grip.far { margin: 0 2px 0 3px; }
.sep { flex: none; width: 1px; height: 18px; margin: 0 2px; background: #aaa; }
.sep.wide { margin: 0 3px; }
.tool { display: flex; flex: none; align-items: center; justify-content: center; width: 23px; height: 20px; border: 1px solid transparent; }
.tool.on { background: #f8f8f8; border-color: #a8a8a8 #fff #fff #a8a8a8; }
.drop { width: 31px; gap: 4px; }
.text { width: auto; gap: 2px; color: #111; }
.auto { padding: 0 3px; }
.frames { display: flex; flex: 1 1 0; min-width: 0; overflow: hidden; }
.frame { font-size: 8px; color: #444; }
.frame.on { width: 21px; margin: 0 1px; }
.find { width: 24px; }
.find svg { width: 14px; height: 14px; }
.note { position: relative; width: 22px; margin-right: 3px; justify-content: flex-start; }
.note svg { width: 12px; height: 11px; margin-top: 8px; }
.note b { position: absolute; right: 2px; top: 1px; width: 14px; height: 14px; border-radius: 7px; background: #e23a25; color: #fff; font-size: 10px; line-height: 14px; text-align: center; }
.glyph { font: bold 10px/12px "Liberation Sans", Arial, sans-serif; color: #555; }
.boxed { width: 12px; border: 1px dotted #777; line-height: 11px; }

.chart {
  display: grid;
  grid-template: 1fr 17px / 1fr 38px;
  padding: 1px 0 0 2px;
  border: 1px solid #808080;
  border-width: 1px 0 0 1px;
  font: 8px/10px "Liberation Sans", Arial, sans-serif;
}
.demo .chart { background: #ffffe1; }
.nano .chart { background: #fff; }
.plot { position: relative; grid-area: 1 / 1; border: 1px solid #222; }
.canvas { width: 100%; height: 266px; }
.nano .canvas { height: 264px; }
.ink { stroke: #3a3a34; stroke-width: 3; }
.ask-line { stroke: #ff5a22; shape-rendering: crispEdges; }
.demo .ask-line { stroke: #ff8a5e; }
.halo { fill: #808080; fill-opacity: .5; }
.legend { position: absolute; left: 4px; top: 2px; white-space: nowrap; }
.legend p { display: flex; align-items: center; gap: 4px; }
.expert { position: absolute; right: 4px; top: 2px; display: flex; align-items: center; gap: 1px; white-space: nowrap; }
.expert svg { width: 11px; height: 11px; }
.tag { position: absolute; left: 100%; width: 35px; height: 10px; margin: -5px 0 0 2px; padding-left: 2px; font-weight: normal; color: #fff; }
.ask { background: #ff4a10; }
.bid { background: #000; }
.prices { grid-area: 1 / 2 / 3 / 3; display: flex; flex-direction: column; justify-content: space-between; padding: 11px 0 15px; }
.nano .prices { padding: 5px 0 16px; }
.prices span { display: flex; align-items: center; gap: 2px; }
.prices span::before { content: ""; width: 2px; height: 1px; background: #222; }
.dates { grid-area: 2 / 1 / 3 / 3; display: grid; grid-auto-flow: column; grid-auto-columns: minmax(0, 1fr); white-space: nowrap; }
.demo .dates { padding-right: 42px; }
.dates span::before { content: ""; display: block; width: 1px; height: 2px; margin-bottom: 1px; background: #222; }

.tabs { display: flex; height: 16px; margin-top: 2px; border-top: 1px solid #222; padding-left: 1px; color: #777; }
.tab-list { display: flex; flex: 1; min-width: 0; overflow: hidden; padding-left: 6px; }
.tab-list button { height: 14px; padding: 0 8px; background: linear-gradient(#888, #888) right 2px / 1px 11px no-repeat; }
.tab-list .active { height: 15px; background: #fff; color: #111; border: 1px solid #222; border-top: 0; border-right-width: 2px; }
.tab-list button:nth-last-child(2) { background: none; }
.step { width: 16px; }
.step svg { width: 12px; height: 12px; margin: auto; }

.terminal { display: flex; margin-top: 3px; padding-right: 3px; }
aside { display: flex; flex-direction: column; width: 13px; }
aside button { height: 12px; }
aside svg { width: 9px; height: 9px; margin: auto; }
.side { flex: 1; margin: 0 2px 0 1px; padding-bottom: 2px; display: flex; flex-direction: column; justify-content: flex-end; background: linear-gradient(#e1eaf4, #b7cbdf); }
.nano .side { background: #a9c1e1; }
.side span { writing-mode: vertical-rl; transform: rotate(180deg); line-height: 10px; font-size: 8px; }
.body { flex: 1; min-width: 0; border-top: 1px solid #888; }
.grid { display: flex; height: 131px; overflow: hidden; border-left: 1px solid #999; border-bottom: 1px solid #444; background: #fff; }
.nano .grid { height: 133px; }
table { flex: 1; width: 100%; height: 133px; table-layout: fixed; border-collapse: collapse; font-size: 9px; line-height: 14px; }
.nano table { height: 132px; }
th, td { padding: 0 3px 0 0; text-align: right; font-weight: normal; white-space: nowrap; overflow: hidden; border-right: 1px solid #cfcfcf; }
th { height: 16px; padding-right: 5px; background: #fafafa; font-size: 10px; border-bottom: 1px solid #ccc; }
th i { margin: 0 2px 0 9px; font-style: normal; color: #777; }
th:first-child { text-align: left; padding-left: 5px; }
td { border-bottom: 1px solid #d6d6d6; }
td:first-child { text-align: left; }
td svg { display: inline-block; width: 13px; height: 13px; margin: 0 4px 0 2px; vertical-align: middle; }
.alt td { background: #e9e9e9; }
.sel td { background: #3397fd; color: #fff; border-color: #7fbcfb; }
tr .goal { background: #5ef25e; color: #111; border-color: #d9e8d9; }
.scroll { display: flex; flex-direction: column; width: 14px; background: #f2f2f2; }
.scroll button { height: 15px; }
.scroll svg { width: 12px; height: 12px; margin: auto; }
.track { display: flex; flex-direction: column; flex: 1; border-top: 1px solid #ddd; background: #fff; }
.thumb { height: 32px; margin-top: 58px; border: 1px solid #aaa; background: linear-gradient(#555 0 0) center / 6px 1px no-repeat, linear-gradient(#555 0 0) 3px 12px / 6px 1px no-repeat, linear-gradient(#555 0 0) 3px 17px / 6px 1px no-repeat, #d9d9d9; }
.nano .thumb { height: 15px; margin-top: 86px; background: linear-gradient(#555 0 0) center / 6px 1px no-repeat, linear-gradient(#555 0 0) 3px 3px / 6px 1px no-repeat, linear-gradient(#555 0 0) 3px 9px / 6px 1px no-repeat, #d9d9d9; }

.sections { display: flex; height: 19px; overflow: hidden; color: #777; padding-left: 3px; }
.sections button { flex: none; height: 16px; padding: 0 8px 0 7px; background: linear-gradient(#888, #888) right 4px / 1px 10px no-repeat; }
.sections .active { padding: 0 6px; background: #fff; border: 1px solid #333; border-top: 0; border-right-width: 2px; color: #111; }
.sections button:nth-child(2) { background: none; }
.sections sub { font: bold 8px/0 "Liberation Sans", Arial, sans-serif; color: #e01a2b; }

.status { display: flex; align-items: center; height: 20px; margin-top: auto; border-top: 1px solid #c4c4c4; padding-left: 3px; font-size: 9px; }
.status span { flex: 59 1 0; height: 15px; border-right: 1px solid #aaa; white-space: nowrap; }
.status .hint { flex: 170 0 0; }
.status .profile { flex: 97 1 0; padding-left: 5px; }
.status .wide { flex: 85 1 0; }
.status .net { flex: 31 1 0; }
.status svg { width: 14px; height: 14px; margin: 4px 0 0 2px; }
</style>
